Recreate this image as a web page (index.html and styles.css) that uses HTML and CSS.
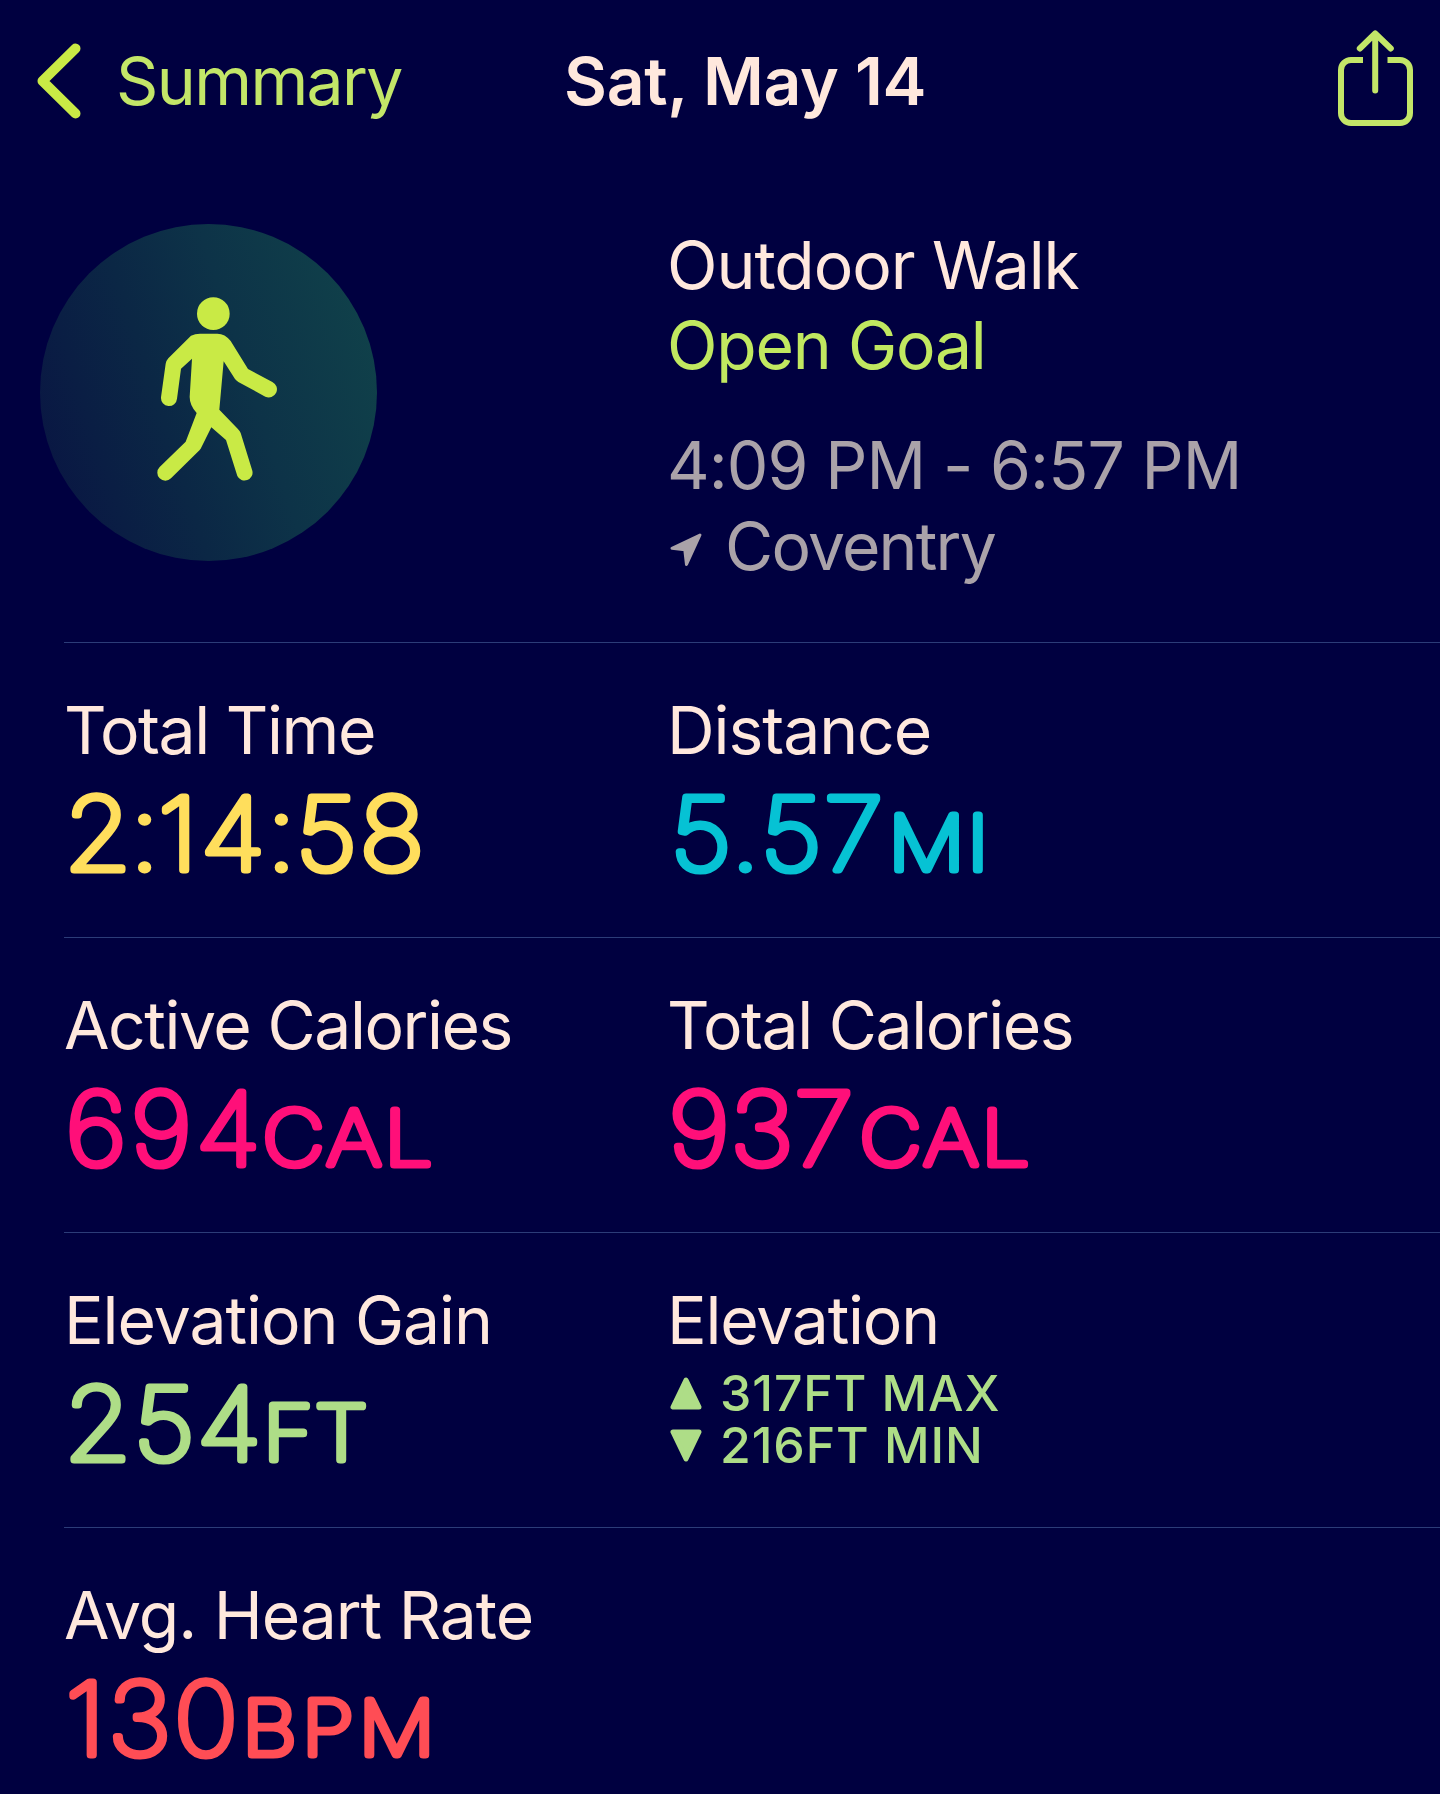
FILE: index.html
```
<!DOCTYPE html>
<html lang="en">
<head>
    <meta charset="UTF-8">
    <meta name="viewport" content="width=device-width, initial-scale=1.0">
    <title>Outdoor Walk</title>
    <link rel="stylesheet" href="styles.css">
</head>
<body>
<header class="nav">
    <a class="back" href="#">
        <svg class="chevron" width="44" height="76" viewBox="0 0 44 76">
            <path d="M38.500 5.500 5.500 38l33 32.500"/>
        </svg>
        <span>Summary</span>
    </a>
    <h1 class="title">Sat, May 14</h1>
    <a class="share" href="#" aria-label="Share">
        <svg width="75" height="96" viewBox="0 0 75 96">
            <path d="M25 30H13a10 10 0 0 0-10 10v43a10 10 0 0 0 10 10h49a10 10 0 0 0 10-10V40a10 10 0 0 0-10-10H49.500"/>
            <path class="arrow" d="M37.200 4v56.500M21.800 18.500 37.200 3.500l15.600 15"/>
        </svg>
    </a>
</header>

<main>
    <section class="workout">
        <div class="badge">
            <svg class="walker" width="337" height="337" viewBox="60 71 1011 1011">
                <circle cx="580" cy="340" r="49"/>
                <path d="M513 406Q525 400 540 400H592Q615 400 632 422L684 506 757 545A24 24 0 0 1 736 589L655 545Q649 541 645 536L611 483 598 628 653 685Q660 692 662 698L697 811A24 24 0 0 1 652 827L618 719 574 681 542 745Q538 751 533 755L453 834A24 24 0 0 1 419 800L497 724 530 638Q509 615 509 590L516 475 483 505 471 595A24 24 0 0 1 423 591L437 490Q438 482 445 474Z"/>
            </svg>
        </div>
        <div class="info">
            <p class="loose">Outdoor Walk</p>
            <p class="goal">Open Goal</p>
            <p class="time">4:09 PM - 6:57 PM</p>
            <p class="place">
                <svg width="32" height="34" viewBox="0 0 32 34">
                    <path d="M30 2 2 15.300 14.800 16.800 16.500 31.500Z"/>
                </svg>
                <span>Coventry</span>
            </p>
        </div>
    </section>

    <section class="row">
        <div class="stat">
            <h2 class="tight">Total Time</h2>
            <svg class="value yellow" width="400" height="120">
                <text class="num" x="0.2" y="100" dx="0 -3 -3 1 0 -2 1" letter-spacing="1.8">2:14:58</text>
            </svg>
        </div>
        <div class="stat">
            <h2 class="loose">Distance</h2>
            <svg class="value cyan" width="400" height="120">
                <text class="num" x="3.2" y="100" letter-spacing="2.2">5.57</text>
                <text class="unit" x="197.8" y="100" letter-spacing="2.4">MI</text>
            </svg>
        </div>
    </section>

    <section class="row">
        <div class="stat">
            <h2 class="tight">Active Calories</h2>
            <svg class="value pink" width="400" height="120">
                <text class="num" x="1.4" y="100" letter-spacing="4">694</text>
                <text class="unit" x="177.4" y="100" letter-spacing="3">CAL</text>
            </svg>
        </div>
        <div class="stat">
            <h2 class="tight">Total Calories</h2>
            <svg class="value pink" width="400" height="120">
                <text class="num" x="1.4" y="100" letter-spacing="0.9">937</text>
                <text class="unit" x="172" y="100" letter-spacing="3">CAL</text>
            </svg>
        </div>
    </section>

    <section class="row">
        <div class="stat">
            <h2 class="loose">Elevation Gain</h2>
            <svg class="value green" width="400" height="120">
                <text class="num" x="0.3" y="100" letter-spacing="2.2">254</text>
                <text class="unit" x="177.9" y="100" letter-spacing="1.9">FT</text>
            </svg>
        </div>
        <div class="stat">
            <h2>Elevation</h2>
            <ul class="range">
                <li>
                    <svg width="32" height="33" viewBox="0 0 32 33"><path d="M16 3 3 30h26Z"/></svg>
                    <span>317FT MAX</span>
                </li>
                <li>
                    <svg width="32" height="33" viewBox="0 0 32 33"><path d="M16 30 3 3h26Z"/></svg>
                    <span>216FT MIN</span>
                </li>
            </ul>
        </div>
    </section>

    <section class="row">
        <div class="stat">
            <h2 class="loose">Avg. Heart Rate</h2>
            <svg class="value red" width="400" height="120">
                <text class="num" x="1.4" y="100" letter-spacing="2.8">130</text>
                <text class="unit" x="159.2" y="100" letter-spacing="4.6">BPM</text>
            </svg>
        </div>
    </section>
</main>
</body>
</html>
```
FILE: styles.css
```
*,
*::before,
*::after {
    box-sizing: border-box;
}

body {
    margin: 0;
    height: 1794px;
    overflow: hidden;
    background-color: #000040;
    color: #ffe8dd;
    font-family: Inter, "Liberation Sans", sans-serif;
    font-size: 66px;
    line-height: 80px;
    letter-spacing: -1.2px;
}

h1,
h2,
p,
ul {
    margin: 0;
    padding: 0;
    font-size: inherit;
    font-weight: 400;
}

svg {
    display: block;
    flex: none;
}

/* Top bar */
.nav {
    display: grid;
    grid-template-columns: 527px 1fr auto;
    align-items: center;
    height: 162px;
    padding: 0 27px 0 37px;
}

.back {
    display: flex;
    align-items: center;
    gap: 35px;
    color: #c3e668;
    text-decoration: none;
    letter-spacing: -1.6px;
}

.chevron path {
    fill: none;
    stroke: #c9ea45;
    stroke-width: 10;
    stroke-linecap: round;
    stroke-linejoin: round;
}

.title {
    font-weight: 600;
    letter-spacing: -0.3px;
}

.share {
    margin-bottom: 6px;
}

.share path {
    fill: none;
    stroke: #c3e668;
    stroke-width: 6;
}

.share .arrow {
    stroke-linecap: round;
    stroke-linejoin: round;
}

/* Workout summary */
.workout {
    display: grid;
    grid-template-columns: 627px 1fr;
    height: 480px;
    padding: 62px 0 0 40px;
}

.badge {
    width: 337px;
    height: 337px;
    border-radius: 50%;
    background: linear-gradient(72deg, #091543 5%, #0b2745 38%, #0d3348 60%, #10424a 95%);
}

.walker {
    fill: #c9ea45;
}

.info {
    padding-top: 1px;
}

.goal {
    color: #c1e860;
}

.time {
    margin-top: 40px;
    color: #aaa2a9;
    letter-spacing: -0.9px;
}

.place {
    display: flex;
    align-items: center;
    gap: 23px;
    padding: 1px 0 0 3px;
    color: #aaa2a9;
    letter-spacing: -1.8px;
}

.place svg {
    margin-top: 7px;
}

.place path {
    fill: #aaa2a9;
    stroke: #aaa2a9;
    stroke-width: 3;
    stroke-linejoin: round;
}

/* Stats */
.row {
    display: grid;
    grid-template-columns: 603px 1fr;
    height: 295px;
    margin-left: 64px;
    padding-top: 47px;
    border-top: 1px solid #2c3c78;
}

.tight {
    letter-spacing: -1.45px;
}

.loose {
    letter-spacing: -1.05px;
}

.value {
    overflow: visible;
    letter-spacing: 0;
    fill: currentColor;
    stroke: currentColor;
    stroke-width: 7.2;
    stroke-linejoin: round;
}

/* thin letters with a round outline give soft stroke ends */
.value text {
    font-weight: 100;
}

.num {
    font-size: 101px;
    transform: scaleX(1.07);
}

.unit {
    font-size: 76px;
    transform: scaleX(1.12);
}

.yellow {
    color: #ffde5c;
}

.cyan {
    color: #06c2d4;
}

.pink {
    color: #ff0f79;
}

.green {
    color: #aedd87;
}

.red {
    color: #ff4d55;
}

.range {
    padding: 8px 0 0 3px;
    list-style: none;
    color: #aedd87;
    font-size: 50px;
    font-weight: 500;
    line-height: 51.5px;
    letter-spacing: 0.9px;
}

.range li {
    display: flex;
    align-items: center;
    gap: 18px;
}

.range path {
    fill: #aedd87;
    stroke: #aedd87;
    stroke-width: 5;
    stroke-linejoin: round;
}
```
